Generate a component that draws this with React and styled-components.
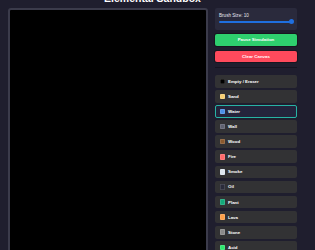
import React, { useState } from "react";
import styled, { createGlobalStyle } from "styled-components";

const Global = createGlobalStyle`
  html, body { margin: 0; padding: 0; background: #1f1e2e; }
  body { font-family: "Liberation Sans", Arial, sans-serif; overflow: hidden; }
`;

const Page = styled.div`
  width: 315px;
  height: 250px;
  box-sizing: border-box;
  padding-left: 8px;
  display: flex;
  flex-direction: column;
  align-items: flex-start;
  overflow: hidden;
`;

const Title = styled.h1`
  flex: none;
  margin: -8px 0 0 0;
  width: 289px;
  height: 16px;
  text-align: center;
  font-size: 10.5px;
  line-height: 12px;
  font-weight: 700;
  color: #ffffff;
`;

const Main = styled.div`
  flex: none;
  display: flex;
  gap: 7px;
  align-items: flex-start;
`;

const Canvas = styled.div`
  width: 196px;
  height: 260px;
  background: #000;
  border: 2px solid #3b3b4b;
  border-radius: 3px;
`;

const Sidebar = styled.div`
  width: 82px;
  display: flex;
  flex-direction: column;
`;

const SliderPanel = styled.div`
  background: #2a2a3c;
  border-radius: 2px;
  height: 22px;
  box-sizing: border-box;
  padding: 5px 4px 0 4px;
`;

const Label = styled.div`
  font-size: 4.6px;
  line-height: 5px;
  color: #e6e6ee;
`;

const Track = styled.div`
  position: relative;
  margin: 3px 0 0 0;
  height: 1.6px;
  width: 74px;
  background: #1f6fe0;
  border-radius: 1px;
`;

const Thumb = styled.div`
  position: absolute;
  right: -1px;
  top: 50%;
  width: 5px;
  height: 5px;
  margin-top: -2.5px;
  border-radius: 50%;
  background: #1f6fe0;
`;

const Button = styled.button`
  all: unset;
  box-sizing: border-box;
  display: flex;
  align-items: center;
  justify-content: center;
  width: 82px;
  height: 11.5px;
  margin-top: ${(p) => p.$mt}px;
  border-radius: 2px;
  background: ${(p) => p.$bg};
  box-shadow: 0 0 0 1px #17161f;
  color: #fff;
  font-size: 4.4px;
  font-weight: 700;
`;

const Divider = styled.div`
  height: 1px;
  background: #151420;
  margin-top: 5px;
`;

const List = styled.div`
  display: flex;
  flex-direction: column;
  gap: 2.5px;
  margin-top: 7px;
`;

const Row = styled.div`
  box-sizing: border-box;
  height: 12.6px;
  display: flex;
  align-items: center;
  gap: 3px;
  padding-left: 3.5px;
  border-radius: 2px;
  background: ${(p) => (p.$active ? "#24243c" : "#323234")};
  border: 1px solid ${(p) => (p.$active ? "#27b3a4" : "transparent")};
  color: #fff;
  font-size: 4.4px;
  font-weight: 700;
`;

const Swatch = styled.span`
  width: 5.5px;
  height: 5.5px;
  border-radius: 1px;
  background: ${(p) => p.$c};
  box-shadow: inset 0 0 0 0.5px rgba(255, 255, 255, 0.25);
  flex: none;
`;

const elements = [
  ["Empty / Eraser", "#000000"],
  ["Sand", "#f6cf72"],
  ["Water", "#4b8fe8"],
  ["Wall", "#5f6270"],
  ["Wood", "#8a5a2e"],
  ["Fire", "#ff6b6b"],
  ["Smoke", "#dde6f0"],
  ["Oil", "#2a2b3a"],
  ["Plant", "#14a97a"],
  ["Lava", "#ffa04a"],
  ["Stone", "#8a8a8a"],
  ["Acid", "#2ee86f"],
];

export default function App() {
  const [sel, setSel] = useState("Water");
  return (
    <Page>
      <Global />
      <Title>Elemental Sandbox</Title>
      <Main>
        <Canvas />
        <Sidebar>
          <SliderPanel>
            <Label>Brush Size: 10</Label>
            <Track>
              <Thumb />
            </Track>
          </SliderPanel>
          <Button $bg="#2ecf6e" $mt={4}>Pause Simulation</Button>
          <Button $bg="#ff4a5c" $mt={5}>Clear Canvas</Button>
          <Divider />
          <List>
            {elements.map(([name, c]) => (
              <Row key={name} $active={sel === name} onClick={() => setSel(name)}>
                <Swatch $c={c} />
                {name}
              </Row>
            ))}
          </List>
        </Sidebar>
      </Main>
    </Page>
  );
}
